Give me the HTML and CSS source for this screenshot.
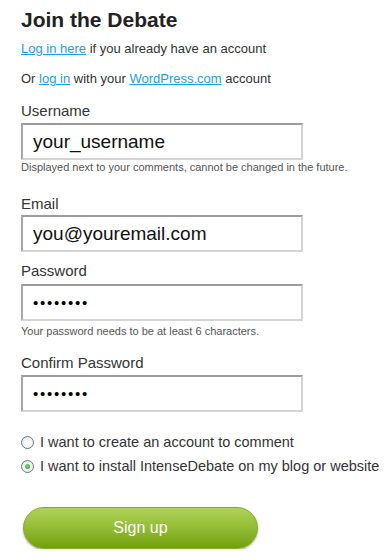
FILE: index.html
```html
<!DOCTYPE html>
<html>
<head>
<meta charset="utf-8">
<link rel="stylesheet" href="styles.css">
</head>
<body>
<div class="page">
  <h1 class="title">Join the Debate</h1>
  <p class="line1"><a href="#">Log in here</a> if you already have an account</p>
  <p class="line2">Or <a href="#">log in</a> with your <a href="#">WordPress.com</a> account</p>

  <label class="label lbl-user">Username</label>
  <input class="field f-user" type="text" value="your_username">
  <p class="hint hint-user">Displayed next to your comments, cannot be changed in the future.</p>

  <label class="label lbl-email">Email</label>
  <input class="field f-email" type="text" value="you@youremail.com">

  <label class="label lbl-pass">Password</label>
  <input class="field f-pass dots" type="text" value="••••••••">
  <p class="hint hint-pass">Your password needs to be at least 6 characters.</p>

  <label class="label lbl-confirm">Confirm Password</label>
  <input class="field f-confirm dots" type="text" value="••••••••">

  <div class="radios">
    <div class="radio-row"><span class="radio"></span><span>I want to create an account to comment</span></div>
    <div class="radio-row"><span class="radio checked"></span><span>I want to install IntenseDebate on my blog or website</span></div>
  </div>

  <button class="signup">Sign up</button>
</div>
</body>
</html>
```

FILE: styles.css
```css
html, body {
  margin: 0;
  padding: 0;
  background: #ffffff;
}
.page {
  font-family: "Liberation Sans", Arial, sans-serif;
  color: #333333;
  padding: 7px 0 0 21px;
  display: flex;
  flex-direction: column;
  align-items: flex-start;
}
.title {
  margin: 0;
  font-size: 21px;
  line-height: 26px;
  font-weight: bold;
  color: #222222;
}
.line1, .line2 {
  margin: 0;
  font-size: 13px;
  line-height: 15px;
  color: #333333;
}
.line1 { margin-top: 8px; }
.line2 { margin-top: 15px; }
a {
  color: #1e9de2;
  text-decoration: underline;
}
.label {
  display: block;
  font-size: 15px;
  line-height: 17px;
  color: #333333;
}
.lbl-user { margin-top: 16px; }
.lbl-email { margin-top: 21px; }
.lbl-pass { margin-top: 10px; }
.lbl-confirm { margin-top: 16px; }
.field {
  box-sizing: border-box;
  width: 282px;
  height: 37px;
  margin: 4px 0 0 0;
  padding: 0 0 0 10px;
  border-style: solid;
  border-width: 2px;
  border-color: #9c9c9c #d4d4d4 #d4d4d4 #a8a8a8;
  background: #ffffff;
  font-family: "Liberation Sans", Arial, sans-serif;
  font-size: 19px;
  color: #111111;
  outline: none;
}
.f-email { margin-top: 3px; }
.f-pass { margin-top: 5px; }
.dots {
  font-size: 15px;
  letter-spacing: 1.75px;
  color: #000000;
}
.hint {
  margin: 0;
  font-size: 11px;
  line-height: 13px;
  color: #555555;
}
.hint-user { margin-top: 1px; }
.hint-pass { margin-top: 4px; }
.radios {
  margin-top: 22px;
  display: flex;
  flex-direction: column;
  gap: 7px;
}
.radio-row {
  display: flex;
  align-items: center;
  gap: 6px;
  font-size: 14.5px;
  line-height: 17px;
  color: #333333;
}
.radio {
  box-sizing: border-box;
  width: 13px;
  height: 13px;
  border-radius: 50%;
  border: 1px solid #5f7a96;
  background: radial-gradient(circle at 60% 65%, #ffffff 0%, #e2e6ea 100%);
  display: flex;
  align-items: center;
  justify-content: center;
}
.radio.checked::after {
  content: "";
  width: 5px;
  height: 5px;
  border-radius: 50%;
  background: radial-gradient(circle at 40% 40%, #7fdc6f 0%, #21a121 100%);
}
.signup {
  margin: 32px 0 0 2px;
  width: 235px;
  height: 42px;
  border: 1px solid #84ad2a;
  border-radius: 21px;
  background: linear-gradient(to bottom, #b0d15a 0%, #96bf38 45%, #72a00e 100%);
  box-shadow: 0 1px 2px rgba(0,0,0,0.35);
  color: #ffffff;
  font-family: "Liberation Sans", Arial, sans-serif;
  font-size: 16px;
  padding: 0;
}
```
